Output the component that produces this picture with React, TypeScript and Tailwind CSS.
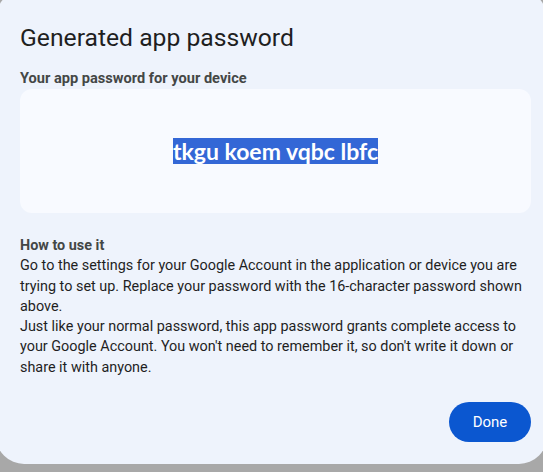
export default function App() {
  return (
    <div className="h-screen w-full overflow-hidden bg-[#a8a8a8]">
      <div className="-ml-[4px] -mt-[10px] flex h-[474px] w-[551px] flex-col rounded-[28px] bg-[#eef3fc] pl-6 pr-4 pt-[33px] font-['Roboto',sans-serif]">
        <h1 className="text-[24.7px] leading-[30px] text-[#1f1f1f]">Generated app password</h1>
        <p className="mt-[15px] text-[14.6px] font-bold leading-[20px] text-[#444746]">
          Your app password for your device
        </p>
        <div className="mt-[1px] flex h-[124px] items-center justify-center rounded-[12px] bg-[#f8faff]">
          <span className="bg-[#3367d6] font-['Lato',sans-serif] text-[23px] font-bold leading-[26px] text-white">
            tkgu koem vqbc lbfc
          </span>
        </div>
        <div className="mt-[23px] text-[14.4px] leading-[20.3px] text-[#1f1f1f]">
          <p className="font-bold text-[#444746]">How to use it</p>
          <p>
            Go to the settings for your Google Account in the application or device you are trying
            to set up. Replace your password with the 16-character password shown above.
          </p>
          <p>
            Just like your normal password, this app password grants complete access to your
            Google Account. You won't need to remember it, so don't write it down or share it with
            anyone.
          </p>
        </div>
        <div className="mt-[24px] flex justify-end">
          <button className="h-[40px] w-[82px] rounded-full bg-[#0b57d0] text-[15px] font-normal text-white">
            Done
          </button>
        </div>
      </div>
    </div>
  );
}
